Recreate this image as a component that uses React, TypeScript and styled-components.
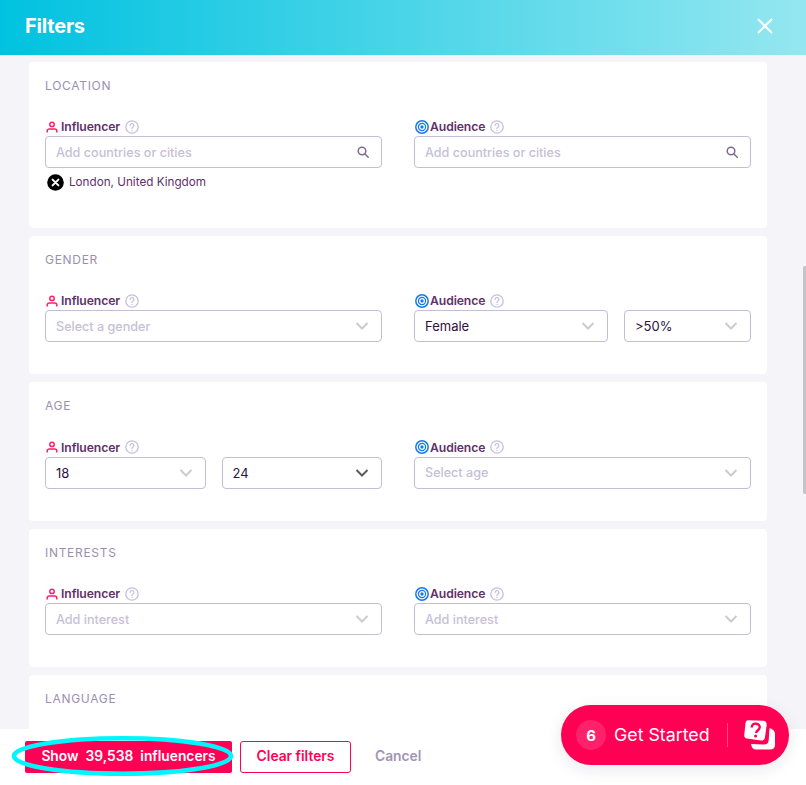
import React from "react";
import styled, { createGlobalStyle } from "styled-components";

const Global = createGlobalStyle`
  html, body { margin: 0; padding: 0; height: 100%; }
  body { font-family: Inter, "Noto Sans", sans-serif; background: #f4f4f9; overflow: hidden; }
  #root { height: 100%; }
  * { box-sizing: border-box; }
`;

const Page = styled.div`
  position: relative;
  width: 806px;
  height: 785px;
  display: flex;
  flex-direction: column;
  overflow: hidden;
  background: #f4f4f9;
`;
const Header = styled.header`
  flex: 0 0 55px;
  display: flex;
  align-items: center;
  justify-content: space-between;
  padding: 0 33px 4px 25px;
  background: linear-gradient(90deg, #00c2e0 0%, #94e7f0 100%);
`;
const Title = styled.h1`
  margin: 0;
  font-size: 20px;
  font-weight: 700;
  color: #fff;
  letter-spacing: -0.2px;
`;
const CloseButton = styled.button`
  display: flex;
  padding: 0;
  border: 0;
  background: none;
`;
const Body = styled.main`
  flex: 1;
  min-height: 0;
  overflow: hidden;
  display: flex;
  flex-direction: column;
  gap: 8px;
  padding: 7px 39px 0 29px;
`;
const Card = styled.section`
  flex: none;
  background: #fff;
  border-radius: 4px;
  padding: 16px 16px 32px;
`;
const CardTitle = styled.h2`
  margin: 0 0 24.4px;
  font-size: 12px;
  line-height: 16px;
  font-weight: 400;
  letter-spacing: 0.7px;
  color: #9b8fb0;
`;
const Columns = styled.div`
  display: grid;
  grid-template-columns: 337px 337px;
  column-gap: 32px;
`;
const Label = styled.div`
  display: flex;
  align-items: center;
  height: 18px;
  padding: 0 0 1px 1px;
  font-size: 12.2px;
  font-weight: 600;
  color: #5f3069;
  letter-spacing: -0.1px;
`;
const LabelIcon = styled.span<{ $gap: number }>`
  display: flex;
  margin-right: ${(p) => p.$gap}px;
`;
const Help = styled.span`
  display: flex;
  margin-left: 5px;
`;
const Fields = styled.div`
  display: flex;
  gap: 16px;
`;
const Field = styled.div<{ $width?: number }>`
  flex: ${(p) => (p.$width ? `0 0 ${p.$width}px` : 1)};
  min-width: 0;
  height: 32px;
  display: flex;
  align-items: center;
  justify-content: space-between;
  padding: 0 12px 0 10px;
  border: 1px solid #c4bdd5;
  border-radius: 4px;
  background: #fff;
  font-size: 13px;
  color: #2f1240;
`;
const Placeholder = styled.span`
  color: #c6c0d7;
  font-size: 12.6px;
  font-weight: 500;
`;
const Chip = styled.div`
  display: flex;
  align-items: center;
  gap: 5px;
  height: 24px;
  margin: 2px 0 1.6px;
  padding-left: 2px;
  font-size: 11.7px;
  color: #5f3069;
`;
const ChipClose = styled.span`
  display: flex;
  flex: none;
`;
const Footer = styled.footer`
  flex: 0 0 56px;
  display: flex;
  align-items: flex-start;
  padding: 12px 0 0 25px;
  background: #fff;
`;
const Primary = styled.button`
  width: 207px;
  height: 32px;
  padding: 0 0 2px;
  border: 0;
  border-radius: 2px;
  background: #ff0055;
  color: #fff;
  font: 600 13.8px Inter, sans-serif;
  white-space: pre;
`;
const Outline = styled.button`
  width: 111px;
  height: 32px;
  margin-left: 8px;
  padding: 0 0 2px;
  border: 1px solid #ff0055;
  border-radius: 3px;
  background: #fff;
  color: #ff0055;
  font: 600 13.8px Inter, sans-serif;
`;
const Ghost = styled.button`
  height: 32px;
  margin-left: 24px;
  padding: 0 0 2px;
  border: 0;
  background: none;
  color: #a195b5;
  font: 600 13.8px Inter, sans-serif;
`;
const Highlight = styled.svg`
  position: absolute;
  left: 10px;
  top: 735px;
  pointer-events: none;
`;
const Scrollbar = styled.div`
  position: absolute;
  right: 0;
  top: 266px;
  width: 3px;
  height: 228px;
  border-radius: 2px 0 0 2px;
  background: #c4c4c8;
`;
const Launcher = styled.div`
  position: absolute;
  left: 561px;
  top: 705px;
  width: 228px;
  height: 60px;
  display: flex;
  align-items: center;
  padding-left: 15px;
  border-radius: 30px;
  background: #ff0055;
  box-shadow: 0 4px 16px rgba(40, 20, 60, 0.1);
  color: #fff;
`;
const Count = styled.span`
  flex: none;
  width: 30px;
  height: 30px;
  display: flex;
  align-items: center;
  justify-content: center;
  border-radius: 50%;
  background: rgba(255, 255, 255, 0.13);
  font-size: 15px;
  font-weight: 700;
`;
const LauncherText = styled.span`
  margin: 0 0 1px 8px;
  width: 113px;
  font-size: 17.8px;
  font-weight: 400;
  white-space: nowrap;
`;
const Divider = styled.span`
  flex: none;
  width: 1px;
  height: 24px;
  background: rgba(255, 255, 255, 0.3);
`;
const LauncherIcon = styled.span`
  display: flex;
  margin-left: 16px;
`;

const Person = () => (
  <svg width="12" height="12" viewBox="0 0 12 12" fill="none" stroke="#ff1f6b" strokeWidth="1.5">
    <circle cx="6" cy="3.4" r="2.2" />
    <path d="M1.2 11.5V10a2 2 0 0 1 2-2h5.6a2 2 0 0 1 2 2v1.5" />
  </svg>
);
const Target = () => (
  <svg width="14" height="14" viewBox="0 0 14 14" fill="none" stroke="#1479f0">
    <circle cx="7" cy="7" r="6.2" strokeWidth="1.5" />
    <circle cx="7" cy="7" r="3.6" strokeWidth="1.2" />
    <circle cx="7" cy="7" r="1.2" strokeWidth="1" fill="#1479f0" />
  </svg>
);
const HelpIcon = () => (
  <svg width="14" height="14" viewBox="0 0 14 14" fill="none" stroke="#c5bfdd">
    <circle cx="7" cy="7" r="6.2" strokeWidth="1.3" />
    <path d="M5.1 5.5a1.9 1.9 0 1 1 2.9 1.6c-.7.4-1 .8-1 1.6" strokeWidth="1.2" strokeLinecap="round" />
    <circle cx="7" cy="10.4" r=".7" fill="#c5bfdd" stroke="none" />
  </svg>
);
const Search = () => (
  <svg width="12" height="12" viewBox="0 0 12 12" fill="none" stroke="#7f6a92" strokeWidth="1.5">
    <circle cx="5" cy="5" r="3.8" />
    <path d="M8 8l3.2 3.2" strokeLinecap="round" />
  </svg>
);
const Chevron = ({ dark }: { dark?: boolean }) => (
  <svg width="14" height="8" viewBox="0 0 14 8" fill="none" stroke={dark ? "#5c5c5c" : "#cccccc"} strokeWidth="2">
    <path d="M1.5 1l5.5 5.5L12.5 1" />
  </svg>
);
const ClearCircle = () => (
  <svg width="17" height="17" viewBox="0 0 17 17">
    <circle cx="8.5" cy="8.5" r="8.3" fill="#000" />
    <path d="M5.6 5.6l5.8 5.8M11.4 5.6l-5.8 5.8" stroke="#fff" strokeWidth="2" strokeLinecap="round" />
  </svg>
);
const LauncherLogo = () => (
  <svg width="31" height="30" viewBox="0 0 31 30">
    <path d="M4 .3L19 .8Q23 1 22.7 5L21 17Q20.5 21 17 20.5L3 18.5Q-.2 18 .3 14.5L1.5 3Q2 0 4 .3Z" fill="#fff" />
    <path d="M7.7 7.5C8 4.5 10 3.5 12 3.7C14.5 4 16 5.6 15.7 7.7C15.4 10 12.5 10.5 12 13" fill="none" stroke="#ff0055" strokeWidth="2.4" />
    <circle cx="11.6" cy="16" r="1.5" fill="#ff0055" />
    <path d="M25.5 8C28 9 31 10.5 31 14V25C31 28 29 29.5 26 29.5H12C9 29.5 7.5 27.5 7 24L20 24.5C23 24.5 24.5 23 24.7 20Z" fill="#fff" />
  </svg>
);

const FieldLabel = ({ kind }: { kind: "Influencer" | "Audience" }) => (
  <Label>
    <LabelIcon $gap={kind === "Influencer" ? 3 : 1}>{kind === "Influencer" ? <Person /> : <Target />}</LabelIcon>
    {kind}
    <Help>
      <HelpIcon />
    </Help>
  </Label>
);
const Select = ({ text, placeholder, dark, width }: { text: string; placeholder?: boolean; dark?: boolean; width?: number }) => (
  <Field $width={width}>
    {placeholder ? <Placeholder>{text}</Placeholder> : <span>{text}</span>}
    <Chevron dark={dark} />
  </Field>
);
const SearchInput = () => (
  <Field>
    <Placeholder>Add countries or cities</Placeholder>
    <Search />
  </Field>
);

export default function App() {
  return (
    <Page>
      <Global />
      <Header>
        <Title>Filters</Title>
        <CloseButton aria-label="Close">
          <svg width="16" height="16" viewBox="0 0 16 16" stroke="#fff" strokeWidth="2">
            <path d="M1 1l14 14M15 1L1 15" />
          </svg>
        </CloseButton>
      </Header>
      <Body>
        <Card>
          <CardTitle>LOCATION</CardTitle>
          <Columns>
            <div>
              <FieldLabel kind="Influencer" />
              <SearchInput />
              <Chip>
                <ChipClose>
                  <ClearCircle />
                </ChipClose>
                London, United Kingdom
              </Chip>
            </div>
            <div>
              <FieldLabel kind="Audience" />
              <SearchInput />
            </div>
          </Columns>
        </Card>
        <Card>
          <CardTitle>GENDER</CardTitle>
          <Columns>
            <div>
              <FieldLabel kind="Influencer" />
              <Select text="Select a gender" placeholder />
            </div>
            <div>
              <FieldLabel kind="Audience" />
              <Fields>
                <Select text="Female" />
                <Select text=">50%" width={127} />
              </Fields>
            </div>
          </Columns>
        </Card>
        <Card>
          <CardTitle>AGE</CardTitle>
          <Columns>
            <div>
              <FieldLabel kind="Influencer" />
              <Fields>
                <Select text="18" />
                <Select text="24" dark />
              </Fields>
            </div>
            <div>
              <FieldLabel kind="Audience" />
              <Select text="Select age" placeholder />
            </div>
          </Columns>
        </Card>
        <Card>
          <CardTitle>INTERESTS</CardTitle>
          <Columns>
            <div>
              <FieldLabel kind="Influencer" />
              <Select text="Add interest" placeholder />
            </div>
            <div>
              <FieldLabel kind="Audience" />
              <Select text="Add interest" placeholder />
            </div>
          </Columns>
        </Card>
        <Card>
          <CardTitle>LANGUAGE</CardTitle>
        </Card>
      </Body>
      <Footer>
        <Primary>{"Show  39,538  influencers"}</Primary>
        <Outline>Clear filters</Outline>
        <Ghost>Cancel</Ghost>
      </Footer>
      <Highlight width="226" height="44" viewBox="0 0 226 44" fill="none">
        <ellipse cx="112.5" cy="21" rx="108.5" ry="17.7" stroke="#00f6ff" strokeWidth="4.6" />
      </Highlight>
      <Scrollbar />
      <Launcher>
        <Count>6</Count>
        <LauncherText>Get Started</LauncherText>
        <Divider />
        <LauncherIcon>
          <LauncherLogo />
        </LauncherIcon>
      </Launcher>
    </Page>
  );
}
